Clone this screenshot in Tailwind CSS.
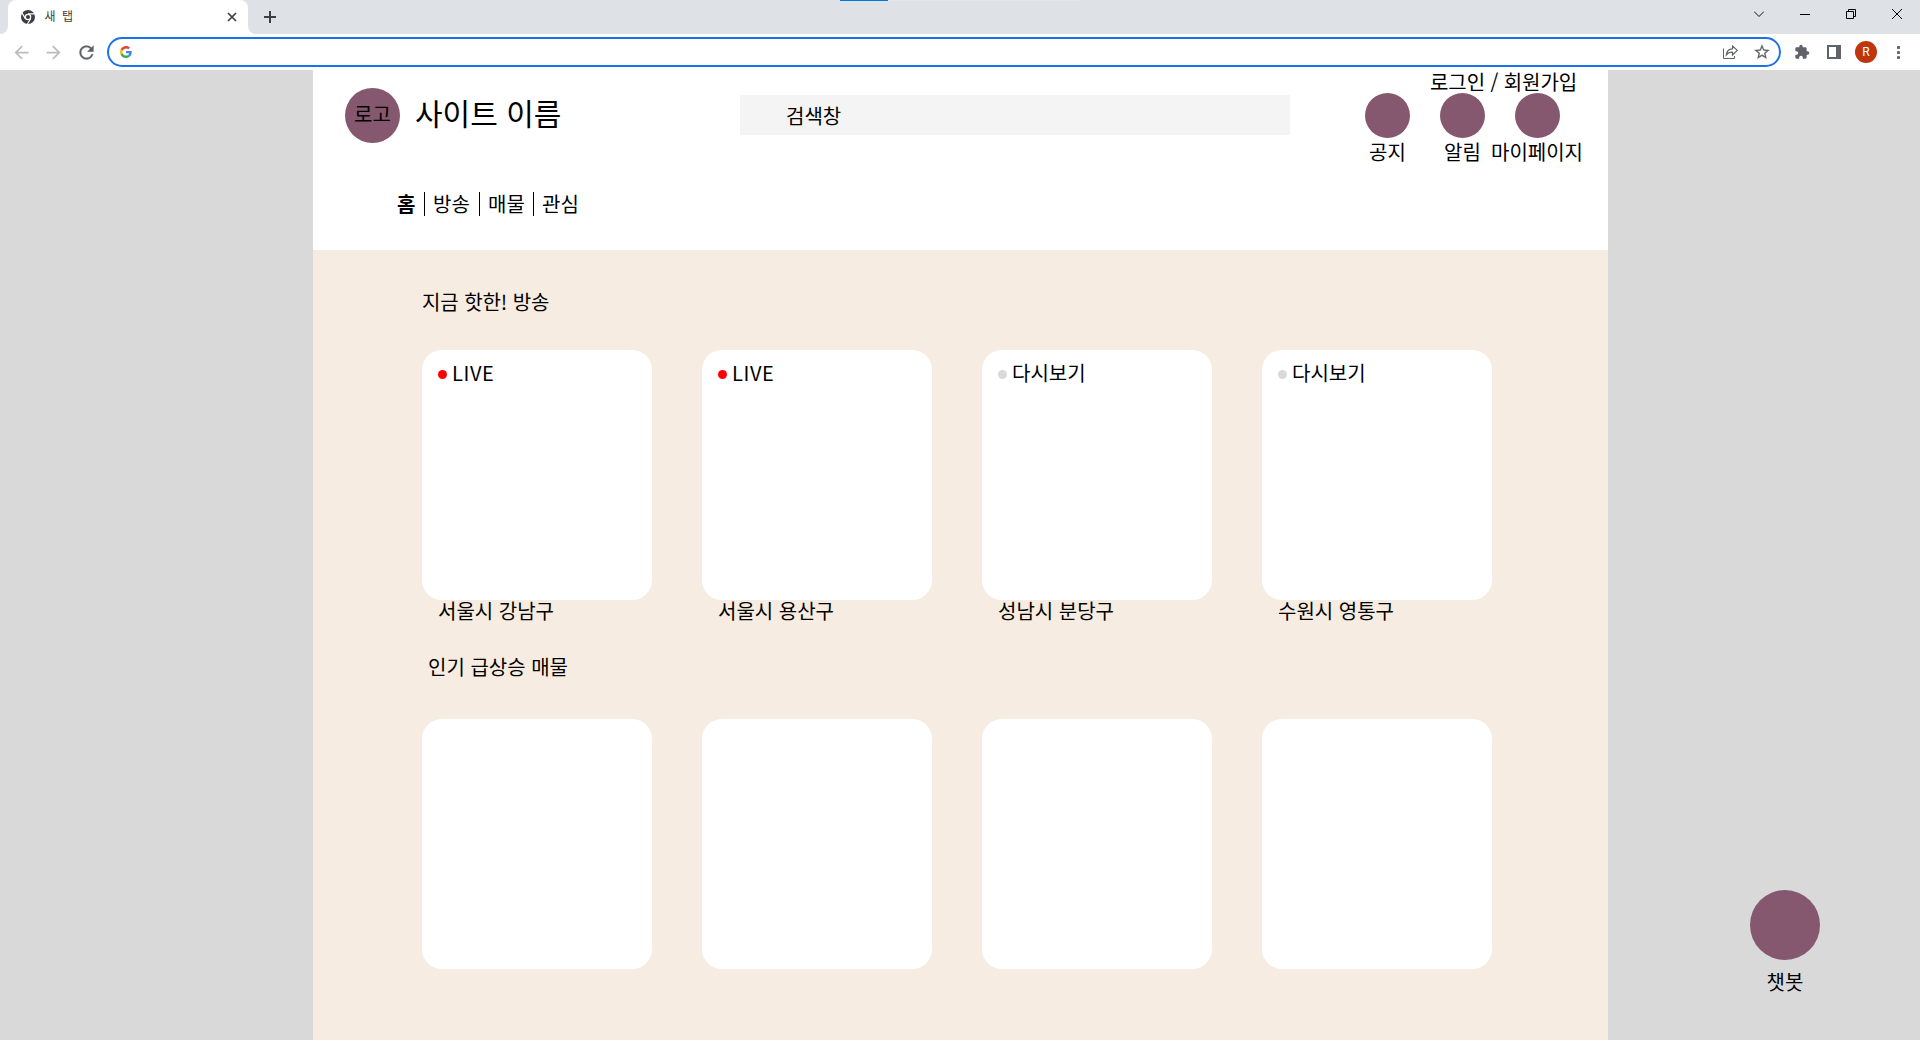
<!DOCTYPE html>
<html lang="ko">
<head>
<meta charset="utf-8">
<title>새 탭</title>
<script src="https://cdn.jsdelivr.net/npm/@tailwindcss/browser@4"></script>
</head>
<body class="relative flex h-[1040px] w-[1920px] flex-col overflow-hidden bg-[#d9d9d9] font-['Noto_Sans_CJK_KR',sans-serif] text-[20px] leading-[29px] whitespace-nowrap text-black">

<!-- Window progress strip -->
<div class="absolute top-0 left-[840px] flex h-px"><i class="w-12 bg-[#0078d7]"></i><i class="w-[193px] bg-[#e5e5e5]"></i></div>

<!-- Tab strip -->
<div class="flex h-[34px] shrink-0 bg-[#dee1e6]">
  <div class="w-2 bg-white"><div class="h-full w-2 rounded-br-lg bg-[#dee1e6]"></div></div>
  <div class="flex w-60 rounded-t-lg bg-white pl-[13px]">
    <svg class="mt-[10px] size-[14px]" viewBox="0 0 14 14"><circle cx="7" cy="7" r="7" fill="#3c4043"/><circle cx="7" cy="7" r="2.7" fill="#3c4043" stroke="#fff" stroke-width="1.2"/><path d="M7 3.9h6.8M4.3 8.6L1 2.9M9.7 8.6L6.4 14" stroke="#fff" stroke-width="1.1"/></svg>
    <span class="mt-[7px] ml-[9.5px] w-[182.5px] text-[12px] leading-[18px] text-[#3c4043] [word-spacing:3px]">새 탭</span>
    <svg class="mt-[12px] size-[10px]" viewBox="0 0 10 10" stroke="#3c4043" stroke-width="1.7"><path d="M1 1l8 8M9 1L1 9"/></svg>
  </div>
  <div class="w-2 bg-white"><div class="h-full w-2 rounded-bl-lg bg-[#dee1e6]"></div></div>
  <svg class="mt-[11px] ml-[8px] size-[12px]" viewBox="0 0 12 12" stroke="#3c4043" stroke-width="2"><path d="M6 0v12M0 6h12"/></svg>
  <div class="ml-auto flex items-start gap-[36px] pr-[18px]">
    <svg class="mt-[9px] size-[10px]" viewBox="0 0 10 10" fill="none" stroke="#111"><path d="M0 2.5l5 5 5-5"/></svg>
    <svg class="mt-[9px] size-[10px]" viewBox="0 0 10 10" stroke="#000"><path d="M0 5.5h10"/></svg>
    <svg class="mt-[9px] size-[10px]" viewBox="0 0 10 10" fill="none" stroke="#000"><path d="M.5 2.5h7v7h-7zM2.5 2.5v-2h7v7h-2"/></svg>
    <svg class="mt-[9px] size-[10px]" viewBox="0 0 10 10" stroke="#000"><path d="M0 0l10 10M10 0L0 10"/></svg>
  </div>
</div>

<!-- Toolbar -->
<div class="flex h-9 shrink-0 items-center bg-white">
  <svg class="ml-[11px] size-[21px]" viewBox="0 0 24 24" fill="#babcbe"><path d="M20 11H7.83l5.59-5.59L12 4l-8 8 8 8 1.41-1.41L7.83 13H20v-2z"/></svg>
  <svg class="ml-[11px] size-[21px]" viewBox="0 0 24 24" fill="#babcbe"><path d="M4 11h12.17l-5.59-5.59L12 4l8 8-8 8-1.41-1.41L16.17 13H4v-2z"/></svg>
  <svg class="ml-[11.500px] size-[21px]" viewBox="0 0 24 24" fill="#5f6368" stroke="#5f6368" stroke-width=".3"><path d="M17.65 6.35A7.958 7.958 0 0 0 12 4c-4.42 0-7.99 3.58-7.99 8s3.57 8 7.99 8c3.73 0 6.84-2.55 7.73-6h-2.08A5.99 5.99 0 0 1 12 18c-3.31 0-6-2.69-6-6s2.69-6 6-6c1.66 0 3.14.69 4.22 1.78L13 11h7V4l-2.35 2.35z"/></svg>
  <div class="ml-[10.500px] flex h-[30px] w-[1674px] items-center rounded-full border-2 border-[#1a73e8] pl-[11px] pr-[8px]">
    <svg class="size-[12px]" viewBox="0 0 48 48"><path fill="#ea4335" d="M24 9.5c3.54 0 6.71 1.22 9.21 3.6l6.85-6.85C35.9 2.38 30.47 0 24 0 14.62 0 6.51 5.38 2.56 13.22l7.98 6.19C12.43 13.72 17.74 9.5 24 9.5z"/><path fill="#4285f4" d="M46.98 24.55c0-1.57-.15-3.09-.38-4.55H24v9.02h12.94c-.58 2.96-2.26 5.48-4.78 7.18l7.73 6c4.51-4.18 7.09-10.36 7.09-17.65z"/><path fill="#fbbc05" d="M10.53 28.59c-.48-1.45-.76-2.99-.76-4.59s.27-3.14.76-4.59l-7.98-6.19C.92 16.46 0 20.12 0 24s.92 7.54 2.56 10.78l7.97-6.19z"/><path fill="#34a853" d="M24 48c6.48 0 11.93-2.13 15.89-5.81l-7.73-6c-2.15 1.45-4.92 2.3-8.16 2.3-6.26 0-11.57-4.22-13.47-9.91l-7.98 6.19C6.51 42.62 14.62 48 24 48z"/></svg>
    <svg class="ml-auto h-[14px] w-[15px]" viewBox="0 0 15 14" fill="none" stroke="#5f6368"><path d="M.5 3.5v10h11V11"/><path d="M9.5 1v2.8C5.8 4 3.7 6.2 3.3 9.8 4.9 7.8 6.8 7.2 9.5 7.2V10L14.3 5.4z" stroke-width="1.2"/></svg>
    <svg class="ml-[15px] size-[18px]" viewBox="0 0 24 24" fill="#5f6368" stroke="#5f6368" stroke-width=".3"><path d="M22 9.24l-7.19-.62L12 2 9.19 8.63 2 9.24l5.46 4.73L5.82 21 12 17.27 18.18 21l-1.63-7.03L22 9.24zM12 15.4l-3.76 2.27 1-4.28-3.32-2.88 4.38-.38L12 6.1l1.71 4.04 4.38.38-3.32 2.88 1 4.28L12 15.4z"/></svg>
  </div>
  <svg class="ml-[13px] size-[16px]" viewBox="0 0 24 24" fill="#5f6368"><path d="M20.5 11H19V7c0-1.1-.9-2-2-2h-4V3.5a2.5 2.5 0 0 0-5 0V5H4c-1.1 0-1.99.9-1.99 2v3.8H3.5c1.49 0 2.7 1.21 2.7 2.7s-1.21 2.7-2.7 2.7H2V20c0 1.1.9 2 2 2h3.8v-1.5c0-1.49 1.21-2.7 2.7-2.7 1.49 0 2.7 1.21 2.7 2.7V22H17c1.1 0 2-.9 2-2v-4h1.5a2.5 2.5 0 0 0 0-5z"/></svg>
  <div class="ml-[17px] h-[14px] w-[14px] border-2 border-r-[5px] border-[#5f6368]"></div>
  <div class="ml-[14px] flex size-[22px] items-center justify-center rounded-full bg-[#bf360c] font-['Roboto',sans-serif] text-[12px] leading-none text-white">R</div>
  <svg class="ml-[20px] h-[13px] w-[3px]" viewBox="0 0 3 13" fill="#5f6368"><circle cx="1.5" cy="1.5" r="1.6"/><circle cx="1.5" cy="6.5" r="1.6"/><circle cx="1.5" cy="11.5" r="1.6"/></svg>
</div>

<!-- Site -->
<div class="ml-[313px] flex w-[1295px] flex-1 flex-col">
  <header class="flex h-[180px] shrink-0 flex-col bg-white pl-8">
    <div class="flex h-[119px] items-start">
      <div class="mt-[18px] flex h-[55px] w-[55px] justify-center rounded-full bg-[#85586f] pt-[11px]">로고</div>
      <h1 class="mt-[21px] ml-[15px] w-[325px] text-[30px] leading-[43px]">사이트 이름</h1>
      <div class="mt-[25px] h-10 w-[550px] bg-[#f4f4f4] pt-[6px] pl-[46px]">검색창</div>
      <div class="-mt-[3px] ml-[75px] w-[195px]">
        <div class="pl-[65px] tracking-[-0.08px]">로그인 / 회원가입</div>
        <div class="-mt-[3px] flex gap-[30px]">
          <div class="flex w-[45px] flex-col items-center"><i class="size-[45px] rounded-full bg-[#85586f]"></i><span class="-mt-px">공지</span></div>
          <div class="flex w-[45px] flex-col items-center"><i class="size-[45px] rounded-full bg-[#85586f]"></i><span class="-mt-px">알림</span></div>
          <div class="flex w-[45px] flex-col items-center"><i class="size-[45px] rounded-full bg-[#85586f]"></i><span class="-mt-px -ml-px">마이페이지</span></div>
        </div>
      </div>
    </div>
    <nav class="flex items-center pl-[52px]">
      <b class="w-[27px] font-bold">홈</b><i class="h-6 w-px bg-black"></i>
      <span class="ml-[8px] w-[46px]">방송</span><i class="h-6 w-px bg-black"></i>
      <span class="ml-[8px] w-[45px]">매물</span><i class="h-6 w-px bg-black"></i>
      <span class="ml-[8px]">관심</span>
    </nav>
  </header>

  <main class="flex-1 bg-[#f7ece1] pt-[37px] pl-[109px]">
    <h2 class="tracking-[-0.08px]">지금 핫한! 방송</h2>
    <div class="mt-[34px] flex gap-[50px]">
      <div class="w-[230px]"><div class="flex h-[250px] items-start rounded-[20px] bg-white pl-4"><i class="mt-5 size-[9px] rounded-full bg-[#ff0000]"></i><span class="mt-2 ml-[5px] tracking-[0.6px]">LIVE</span></div><p class="-mt-[4px] pl-4">서울시 강남구</p></div>
      <div class="w-[230px]"><div class="flex h-[250px] items-start rounded-[20px] bg-white pl-4"><i class="mt-5 size-[9px] rounded-full bg-[#ff0000]"></i><span class="mt-2 ml-[5px] tracking-[0.6px]">LIVE</span></div><p class="-mt-[4px] pl-4">서울시 용산구</p></div>
      <div class="w-[230px]"><div class="flex h-[250px] items-start rounded-[20px] bg-white pl-4"><i class="mt-5 size-[9px] rounded-full bg-[#d9d9d9]"></i><span class="mt-2 ml-[5px]">다시보기</span></div><p class="-mt-[4px] pl-4">성남시 분당구</p></div>
      <div class="w-[230px]"><div class="flex h-[250px] items-start rounded-[20px] bg-white pl-4"><i class="mt-5 size-[9px] rounded-full bg-[#d9d9d9]"></i><span class="mt-2 ml-[5px]">다시보기</span></div><p class="-mt-[4px] pl-4">수원시 영통구</p></div>
    </div>
    <h2 class="mt-[27px] pl-[6px]">인기 급상승 매물</h2>
    <div class="mt-[38px] flex gap-[50px]">
      <div class="h-[250px] w-[230px] rounded-[20px] bg-white"></div>
      <div class="h-[250px] w-[230px] rounded-[20px] bg-white"></div>
      <div class="h-[250px] w-[230px] rounded-[20px] bg-white"></div>
      <div class="h-[250px] w-[230px] rounded-[20px] bg-white"></div>
    </div>
  </main>
</div>

<!-- Floating chatbot button -->
<div class="absolute top-[890px] left-[1750px] flex w-[70px] flex-col items-center">
  <i class="size-[70px] rounded-full bg-[#85586f]"></i><span class="mt-[7px]">챗봇</span>
</div>
</body>
</html>
